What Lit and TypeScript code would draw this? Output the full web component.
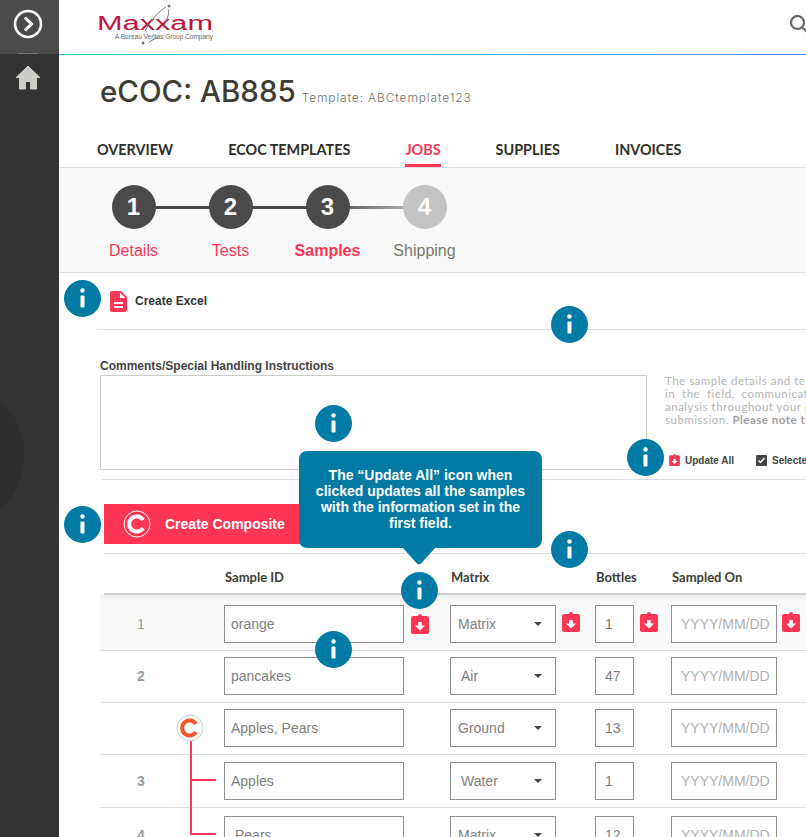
import { LitElement, html, css, svg } from 'lit';
import { customElement } from 'lit/decorators.js';

const infoSpots = [
  [82, 298],
  [569, 324],
  [333, 423],
  [645, 457],
  [82, 524],
  [569, 549],
  [419, 590],
  [333, 649],
];

const tabs = ['Overview', 'eCOC Templates', 'Jobs', 'Supplies', 'Invoices'];

const steps = [
  { n: 1, label: 'Details', state: 'done' },
  { n: 2, label: 'Tests', state: 'done' },
  { n: 3, label: 'Samples', state: 'current' },
  { n: 4, label: 'Shipping', state: 'todo' },
];

const rows = [
  { n: '1', id: 'orange', matrix: 'Matrix', bottles: '1', kind: 'first', nudge: false },
  { n: '2', id: 'pancakes', matrix: 'Air', bottles: '47', kind: 'plain', nudge: true },
  { n: '', id: 'Apples, Pears', matrix: 'Ground', bottles: '13', kind: 'parent', nudge: false },
  { n: '3', id: 'Apples', matrix: 'Water', bottles: '1', kind: 'child', nudge: true },
  { n: '4', id: 'Pears', matrix: 'Matrix', bottles: '12', kind: 'last', nudge: false },
];

const clipIcon = () => html`
  <svg class="clip" viewBox="0 0 18 20" width="18" height="20">
    <path fill="#ff3554" d="M2 2h5a2 2 0 0 1 4 0h5a2 2 0 0 1 2 2v14a2 2 0 0 1-2 2H2a2 2 0 0 1-2-2V4a2 2 0 0 1 2-2z" />
    <path fill="#fff" d="M7.200 8h3.600v3.500H14L9 16.500 4 11.500h3.200z" />
  </svg>
`;

@customElement('app-root')
export class AppRoot extends LitElement {
  static styles = css`
    :host {
      display: block;
      position: relative;
      width: 806px;
      height: 837px;
      overflow: hidden;
      font-family: 'Liberation Sans', Arial, sans-serif;
      background: #fff;
    }
    .shell {
      display: flex;
      height: 837px;
    }
    .sidebar {
      position: relative;
      flex: 0 0 59px;
      background: #333;
      overflow: hidden;
    }
    .toggle {
      position: relative;
      height: 54px;
      display: flex;
      align-items: center;
      justify-content: center;
      padding: 0 3px 7px 0;
      box-sizing: border-box;
      background: #4a4a4a;
    }
    .toggle::after {
      content: '';
      position: absolute;
      left: 18px;
      bottom: 0;
      width: 20px;
      height: 1px;
      background: #777;
    }
    .home {
      display: flex;
      justify-content: center;
      padding: 11px 3px 0 0;
    }
    .blob {
      position: absolute;
      left: -126px;
      top: 380px;
      width: 150px;
      height: 150px;
      border-radius: 50%;
      background: #2e2e2e;
    }
    .main {
      flex: 1;
      min-width: 0;
      overflow: hidden;
    }
    .topbar {
      height: 54px;
      display: flex;
      justify-content: space-between;
      padding-left: 36px;
      border-bottom: 1px solid transparent;
      border-image: linear-gradient(90deg, #1fd6d6, #4f86e8) 1;
    }
    .logo {
      margin-top: 4px;
    }
    .search {
      margin: 15px -6px 0 0;
    }
    .title {
      display: flex;
      align-items: baseline;
      gap: 6px;
      padding: 18px 0 0 41px;
      height: 55px;
      color: #3d3d36;
    }
    .title h1 {
      margin: 0;
      font: 500 29.5px Inter, sans-serif;
    }
    .title span {
      font: 300 12px Inter, sans-serif;
      letter-spacing: 0.85px;
      color: #6f6f66;
    }
    .tabs {
      display: flex;
      gap: 55px;
      padding: 11px 0 0 38px;
      height: 40px;
      border-bottom: 1px solid #ddd;
      box-sizing: border-box;
    }
    .tab {
      font: 700 14.4px Lato, sans-serif;
      text-transform: uppercase;
      color: #2e2e2a;
      height: 28px;
      line-height: 22px;
      box-sizing: border-box;
    }
    .tab.active {
      color: #ff3554;
      border-bottom: 3px solid #ff3554;
    }
    .steps {
      display: flex;
      height: 104px;
      padding-left: 26px;
      background: #f9f9f9;
      border-bottom: 1px solid #ddd;
    }
    .step {
      position: relative;
      width: 97px;
      display: flex;
      flex-direction: column;
      align-items: center;
    }
    .step .num {
      position: relative;
      z-index: 1;
      width: 44px;
      height: 44px;
      margin-top: 17px;
      border-radius: 50%;
      background: #4a4a4a;
      color: #fff;
      font: 700 24px/44px 'Liberation Sans', sans-serif;
      text-align: center;
    }
    .step.todo .num {
      background: #c3c3c3;
    }
    .step::after {
      content: '';
      position: absolute;
      left: 48px;
      top: 38px;
      width: 97px;
      height: 3px;
      background: #4a4a4a;
    }
    .step.current::after {
      background: linear-gradient(90deg, #4a4a4a, #c3c3c3);
    }
    .step:last-child::after {
      display: none;
    }
    .step .label {
      margin-top: 12px;
      font-size: 16px;
      line-height: 20px;
      color: #ff3554;
    }
    .step.current .label {
      font-weight: 700;
    }
    .step.todo .label {
      color: #77776c;
    }
    .excel {
      display: flex;
      align-items: center;
      gap: 8px;
      height: 57px;
      margin-left: 38px;
      padding-left: 13px;
      border-bottom: 1px solid #ddd;
      font-size: 12px;
      font-weight: 700;
      color: #333;
      box-sizing: border-box;
    }
    .comments {
      display: flex;
      margin-left: 41px;
      height: 149px;
      margin-right: -300px;
    }
    .comment-box {
      flex: 0 0 547px;
      padding-top: 29px;
    }
    .comment-box label {
      display: block;
      font-size: 12px;
      font-weight: 700;
      line-height: 14px;
      color: #444;
      margin-bottom: 2px;
    }
    .comment-box .area {
      height: 93px;
      border: 1px solid #ccccc6;
    }
    .notes {
      margin-left: 18px;
      padding-top: 44px;
      width: 400px;
    }
    .notes p {
      margin: 0;
      font: 400 11.5px/13px Lato, sans-serif;
      letter-spacing: 0.5px;
      color: #b4b4b4;
      white-space: pre;
    }
    .notes b {
      font-weight: 700;
      color: #a0a0a0;
    }
    .actions {
      display: flex;
      align-items: center;
      margin: 28px 0 0 4px;
      font-size: 10px;
      font-weight: 700;
      color: #444;
    }
    .actions .clip {
      width: 11px;
      height: 12px;
      margin-right: 5px;
    }
    .check {
      width: 11px;
      height: 11px;
      margin: 0 5px 0 22px;
      background: #444;
      border-radius: 1px;
    }
    .composite {
      margin-left: 43px;
      border-top: 1px solid #ddd;
      padding: 24px 0 0 2px;
    }
    .composite-btn {
      display: flex;
      align-items: center;
      gap: 14px;
      width: 206px;
      height: 40px;
      padding-left: 19px;
      box-sizing: border-box;
      background: #ff3554;
      color: #fff;
      font-size: 14px;
      font-weight: 700;
    }
    .table {
      margin: 9px 0 0 41px;
      width: 800px;
    }
    .head,
    .row {
      display: grid;
      grid-template-columns: 82px 42px 180px 46px 106px 39px 39px 37px 106px 40px;
      align-items: center;
    }
    .head {
      height: 42px;
      box-sizing: border-box;
      margin-left: 4px;
      padding-top: 7px;
      grid-template-columns: 79px 42px 180px 46px 106px 39px 39px 37px 106px 40px;
      border-top: 1px solid #ddd;
      border-bottom: 2px solid #ccc;
      font: 700 13px Lato, sans-serif;
      color: #3d3d36;
    }
    .head .sample {
      grid-column: 3 / 5;
    }
    .head .matrix {
      grid-column: 5 / 7;
    }
    .head .bottles {
      grid-column: 7 / 9;
    }
    .head .sampled {
      grid-column: 9 / 11;
    }
    .row {
      height: 50px;
      padding-bottom: 1px;
      border-bottom: 1px solid #ddd;
      color: #808080;
      font-size: 14px;
    }
    .row.first {
      height: 52px;
      padding: 3px 0 0;
      background: linear-gradient(#eee, #fafafa 6px);
    }
    .row.child {
      height: 52px;
      padding-bottom: 0;
    }
    .row.last {
      height: 54px;
      padding-bottom: 0;
    }
    .num-cell {
      text-align: center;
      color: #999;
      font-size: 14px;
      font-weight: 700;
    }
    .row.first .num-cell {
      font-weight: 400;
    }
    .field {
      height: 38px;
      border: 1px solid #8f8f8f;
      box-sizing: border-box;
      padding-left: 6px;
      line-height: 36px;
      background: #fff;
      white-space: nowrap;
      overflow: hidden;
    }
    .field.select {
      display: flex;
      justify-content: space-between;
      align-items: center;
      padding: 0 13px 0 7px;
    }
    .field.select.nudge {
      padding-left: 10px;
    }
    .field.select::after {
      content: '';
      border: 4px solid transparent;
      border-top-color: #444;
      border-bottom-width: 0;
    }
    .field.small {
      padding-left: 9px;
    }
    .field.date {
      color: #b0b0b0;
      padding-left: 9px;
    }
    .row.last .id {
      padding-left: 10px;
    }
    .icon-cell {
      display: flex;
      padding-left: 6px;
      margin-top: -4px;
    }
    .icon-cell.low {
      padding-left: 7px;
      margin-top: 0;
    }
    .icon-cell.end {
      padding-left: 5px;
    }
    .tree {
      position: relative;
      align-self: stretch;
    }
    .badge {
      position: absolute;
      left: -6px;
      top: 11px;
      z-index: 1;
    }
    .tree-line {
      position: absolute;
      left: 8px;
      top: -1px;
      bottom: -1px;
      width: 2px;
      background: #ff3554;
    }
    .parent .tree-line {
      top: 38px;
    }
    .last .tree-line {
      bottom: auto;
      height: 28px;
    }
    .stub {
      position: absolute;
      left: 8px;
      top: 24px;
      width: 26px;
      height: 2px;
      background: #ff3554;
    }
    .last .stub {
      top: 25px;
    }
    .info {
      position: absolute;
      z-index: 3;
      width: 37px;
      height: 37px;
      margin: -18.5px 0 0 -18.5px;
    }
    .tip {
      position: absolute;
      z-index: 2;
      left: 299px;
      top: 451px;
      width: 243px;
      height: 97px;
      box-sizing: border-box;
      padding: 16px 14px 0;
      border-radius: 8px;
      background: #017aa5;
      color: #fff;
      font-size: 14px;
      font-weight: 700;
      line-height: 16px;
      text-align: center;
    }
    .tip svg {
      position: absolute;
      left: 102px;
      top: 97px;
    }
  `;

  render() {
    return html`
      <div class="shell">
        <nav class="sidebar">
          <div class="blob"></div>
          <div class="toggle">
            <svg width="30" height="30" viewBox="0 0 30 30" fill="none" stroke="#fff">
              <circle cx="15" cy="15" r="13" stroke-width="2.600" />
              <path d="M12 8.500l6.500 6.500-6.500 6.500" stroke-width="3" />
            </svg>
          </div>
          <div class="home">
            <svg width="26" height="25" viewBox="0 0 26 25">
              <path fill="#ccccc6" stroke="#ccccc6" stroke-linejoin="round" d="M13 1L1 12.500h3.500V24h6v-7.500h5V24h6V12.500H25z" />
            </svg>
          </div>
        </nav>
        <main class="main">
          <header class="topbar">
            ${this.renderLogo()}
            <svg class="search" width="22" height="22" viewBox="0 0 22 22" fill="none" stroke="#666" stroke-width="2.200">
              <circle cx="7.500" cy="7.500" r="6.500" />
              <path d="M12.500 12.500l8 8" />
            </svg>
          </header>
          <div class="title">
            <h1>eCOC: AB885</h1>
            <span>Template: ABCtemplate123</span>
          </div>
          <div class="tabs">
            ${tabs.map(
              (t) => html`<div class="tab ${t === 'Jobs' ? 'active' : ''}">${t}</div>`
            )}
          </div>
          <div class="steps">
            ${steps.map(
              (s) => html`
                <div class="step ${s.state}">
                  <div class="num">${s.n}</div>
                  <div class="label">${s.label}</div>
                </div>
              `
            )}
          </div>
          <div class="excel">
            <svg width="17" height="21" viewBox="0 0 17 21">
              <path fill="#ff3554" d="M2 0h9l6 6v13a2 2 0 0 1-2 2H2a2 2 0 0 1-2-2V2a2 2 0 0 1 2-2z" />
              <path fill="#fff" d="M10 1.500L15.500 7H10zM4 11h9v2H4zM4 15h9v2H4z" />
            </svg>
            Create Excel
          </div>
          <div class="comments">
            <div class="comment-box">
              <label>Comments/Special Handling Instructions</label>
              <div class="area"></div>
            </div>
            <div class="notes">
              <p>The sample details and tests can be updated
in  the  field,  communicated to the lab for
analysis throughout your project prior to
submission. <b>Please note that</b></p>
              <div class="actions">
                ${clipIcon()} Update All
                <svg class="check" viewBox="0 0 11 11">
                  <path fill="none" stroke="#fff" stroke-width="1.500" d="M2.500 5.500l2 2 4-4.500" />
                </svg>
                Selected
              </div>
            </div>
          </div>
          <div class="composite">
            <div class="composite-btn">
              <svg width="28" height="28" viewBox="0 0 28 28" fill="none" stroke="#fff">
                <circle cx="14" cy="14" r="13" stroke-width="1" />
                <path d="M20 10a7.500 7.500 0 1 0 0 8" stroke-width="4" />
              </svg>
              Create Composite
            </div>
          </div>
          <div class="table">
            <div class="head">
              <div class="sample">Sample ID</div>
              <div class="matrix">Matrix</div>
              <div class="bottles">Bottles</div>
              <div class="sampled">Sampled On</div>
            </div>
            ${rows.map((r) => this.renderRow(r))}
          </div>
        </main>
      </div>
      <div class="tip">
        The “Update All” icon when clicked updates all the samples with the information set in the first field.
        <svg width="36" height="18" viewBox="0 0 36 18">
          <path fill="#017aa5" d="M2 0h32L20.500 15a3 3 0 0 1-5 0z" />
        </svg>
      </div>
      ${infoSpots.map(
        ([x, y]) => html`
          <svg class="info" style="left:${x}px;top:${y}px" viewBox="0 0 37 37">
            <circle cx="18.500" cy="18.500" r="18.500" fill="#017aa5" />
            <circle cx="18.500" cy="10.500" r="2.200" fill="#fff" />
            <rect x="16.500" y="15.500" width="4" height="12" rx="1" fill="#fff" />
          </svg>
        `
      )}
    `;
  }

  private renderLogo() {
    return html`
      <svg class="logo" width="122" height="42" viewBox="0 0 122 42">
        <text x="2" y="26" font-family="Liberation Sans" font-size="20" textLength="116" lengthAdjust="spacingAndGlyphs" fill="#c0143c">Maxxam</text>
        <text x="20" y="35" font-family="Liberation Sans" font-size="6.500" fill="#666">A Bureau Veritas Group Company</text>
        ${svg`<path d="M50 27C56 16 64 7 71 3" fill="none" stroke="#777" stroke-width="1" />
        <path d="M54 38L63 33M68 24C72 16 75 9 73 5" fill="none" stroke="#777" stroke-width="1" />
        <circle cx="74" cy="2" r="1.500" fill="#777" />
        <circle cx="48" cy="39" r="1.500" fill="#777" />`}
      </svg>
    `;
  }

  private renderRow(r: (typeof rows)[number]) {
    const isParent = r.kind === 'parent';
    const isChild = r.kind === 'child' || r.kind === 'last';
    const isFirst = r.kind === 'first';
    return html`
      <div class="row ${r.kind}">
        <div class="num-cell">${r.n}</div>
        <div class="tree">
          ${isParent
            ? html`<svg class="badge" width="28" height="28" viewBox="0 0 28 28" fill="none">
                <circle cx="14" cy="14" r="13" fill="#fff" stroke="#ccc" />
                <path d="M20 10a7.500 7.500 0 1 0 0 8" stroke="#f0562a" stroke-width="4" />
              </svg>`
            : ''}
          ${isParent || isChild ? html`<div class="tree-line"></div>` : ''}
          ${isChild ? html`<div class="stub"></div>` : ''}
        </div>
        <div class="field id">${r.id}</div>
        <div class="icon-cell low">${isFirst ? clipIcon() : ''}</div>
        <div class="field select ${r.nudge ? 'nudge' : ''}">${r.matrix}</div>
        <div class="icon-cell">${isFirst ? clipIcon() : ''}</div>
        <div class="field small">${r.bottles}</div>
        <div class="icon-cell">${isFirst ? clipIcon() : ''}</div>
        <div class="field date">YYYY/MM/DD</div>
        <div class="icon-cell end">${isFirst ? clipIcon() : ''}</div>
      </div>
    `;
  }
}
